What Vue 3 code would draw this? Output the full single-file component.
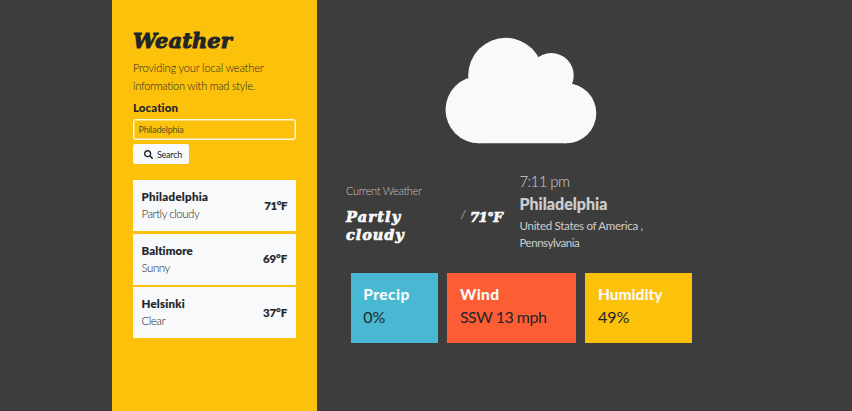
<script setup>
const places = [
  { name: 'Philadelphia', condition: 'Partly cloudy', temp: '71°F', key: 'phl' },
  { name: 'Baltimore', condition: 'Sunny', temp: '69°F', key: 'bal' },
  { name: 'Helsinki', condition: 'Clear', temp: '37°F', key: 'hel' },
]
const stats = [
  { label: 'Precip', value: '0%', kind: 'precip' },
  { label: 'Wind', value: 'SSW 13 mph', kind: 'wind' },
  { label: 'Humidity', value: '49%', kind: 'humidity' },
]
</script>

<template>
  <div class="page">
    <aside class="sidebar">
      <h1>Weather</h1>
      <p class="intro">Providing your local weather<br /><span class="second">information with mad style.</span></p>
      <label class="label" for="location">Location</label>
      <input id="location" class="field" type="text" placeholder="Philadelphia" />
      <button class="search" type="button">
        <svg viewBox="0 0 512 512" width="9" height="9"><path fill="currentColor" d="M505 442.700 405.300 343c-4.500-4.500-10.600-7-17-7H372c27.600-35.300 44-79.700 44-128C416 93.100 322.900 0 208 0S0 93.100 0 208s93.100 208 208 208c48.300 0 92.700-16.400 128-44v16.300c0 6.400 2.500 12.500 7 17l99.700 99.700c9.400 9.400 24.600 9.400 33.900 0l28.300-28.300c9.400-9.400 9.400-24.600.1-34zM208 336c-70.700 0-128-57.200-128-128 0-70.700 57.200-128 128-128 70.700 0 128 57.200 128 128 0 70.700-57.200 128-128 128z" /></svg>
        <span>Search</span>
      </button>
      <ul class="places">
        <li v-for="p in places" :key="p.key" :class="p.key">
          <div>
            <div class="name">{{ p.name }}</div>
            <div class="cond">{{ p.condition }}</div>
          </div>
          <span class="temp">{{ p.temp }}</span>
        </li>
      </ul>
    </aside>

    <main class="main">
      <svg class="cloud" viewBox="0 0 152 107" width="152" height="107">
        <g fill="#f8f9fa">
          <circle cx="34" cy="72.700" r="33.500" />
          <circle cx="60.700" cy="38.300" r="37.500" />
          <circle cx="106.300" cy="38.400" r="22.400" />
          <circle cx="121.300" cy="76.200" r="30" />
          <path d="M34 50h87.300v56.200H34z" />
        </g>
      </svg>
      <section class="summary">
        <div class="current">
          <div class="caption">Current Weather</div>
          <div class="reading">
            <div class="state">Partly<br /><span class="second">cloudy</span></div>
            <div class="degrees"><i>/</i><span>71°F</span></div>
          </div>
        </div>
        <div class="where">
          <div class="time">7:11 pm</div>
          <div class="city">Philadelphia</div>
          <div class="region">United States of America ,<br /><span class="second">Pennsylvania</span></div>
        </div>
      </section>
      <section class="stats">
        <div v-for="s in stats" :key="s.kind" class="stat" :class="s.kind">
          <h2>{{ s.label }}</h2>
          <div class="value">{{ s.value }}</div>
        </div>
      </section>
    </main>
  </div>
</template>

<style>
body { background: #3d3d3d; overflow: hidden; }
</style>

<style scoped>
* { box-sizing: border-box; }
.page {
  display: flex;
  height: 411px;
  padding-left: 112px;
  background: #3d3d3d;
  color: #212529;
  font-family: Lato, "Liberation Sans", sans-serif;
  white-space: nowrap;
}
.sidebar { width: 205px; padding: 26px 21px 0; background: #fcc10a; }
h1, h2, p, ul { margin: 0; padding: 0; }
h1 {
  font: italic 700 21px/30px "DejaVu Serif", serif;
  letter-spacing: 0.1px;
  -webkit-text-stroke: 1px currentColor;
}
.intro { margin-top: 3px; font-size: 11px; font-weight: 300; letter-spacing: -0.12px; line-height: 17.500px; }
.intro .second { letter-spacing: -0.25px; }
.label { display: block; margin-top: 5px; font-size: 11.500px; font-weight: 900; line-height: 17px; letter-spacing: 0.1px; }
.field {
  display: block;
  width: 163px;
  height: 21px;
  margin-top: 3px;
  padding: 0 4.500px;
  border: 1px solid #fff8e0;
  border-radius: 2.500px;
  background: transparent;
  box-shadow: inset 0 0 0 0.5px #fff8e0;
  font: 9px Lato, sans-serif;
  letter-spacing: -0.23px;
}
.field::placeholder { color: #5e5126; opacity: 1; }
.search {
  display: flex;
  align-items: center;
  width: 56px;
  height: 20px;
  margin-top: 4px;
  padding: 0 0 0 11px;
  gap: 4px;
  border: 0;
  border-radius: 2px;
  background: #f8f9fa;
  color: #212529;
  font: 9px Lato, sans-serif;
  letter-spacing: -0.25px;
}
.places { margin-top: 16px; list-style: none; }
.places li {
  display: flex;
  align-items: center;
  justify-content: space-between;
  height: 51px;
  margin-bottom: 2.500px;
  padding: 0 9px 1px 8.500px;
  background: #f8f9fa;
}
.name { font-size: 11.500px; font-weight: 900; letter-spacing: 0.22px; line-height: 17px; -webkit-text-stroke: 0.15px currentColor; }
.phl .name { letter-spacing: 0.3px; }
.bal .name { letter-spacing: 0.1px; }
.cond { font-size: 11.500px; font-weight: 300; letter-spacing: -0.48px; line-height: 17px; }
.temp { font-size: 11.500px; font-weight: 900; letter-spacing: -0.15px; -webkit-text-stroke: 0.15px currentColor; }
.phl .temp { letter-spacing: -0.5px; }

.main { width: 408px; padding: 37px 0 0 29px; color: #f8f9fa; }
.cloud { display: block; margin-left: 99px; }
.summary { display: flex; height: 128.500px; padding-top: 27px; }
.current { width: 173.500px; padding-top: 11px; }
.caption { color: #c3c3c4; font-size: 11px; font-weight: 300; letter-spacing: -0.3px; line-height: 18px; }
.reading {
  display: flex;
  margin-top: 8px;
  font: italic 700 14.500px/18px "DejaVu Serif", serif;
  letter-spacing: 1.2px;
  -webkit-text-stroke: 0.7px currentColor;
}
.state { width: 115px; }
.state .second { letter-spacing: 0.9px; }
.degrees { display: flex; font-size: 13.500px; letter-spacing: -0.8px; }
.degrees i { width: 9px; font: italic 300 11px/14px Lato, sans-serif; -webkit-text-stroke: 0; }
.where { color: #cdcdce; }
.time { font-size: 15px; font-weight: 300; letter-spacing: -0.6px; line-height: 21.500px; }
.city { font-size: 16px; font-weight: 900; line-height: 22px; -webkit-text-stroke: 0.15px currentColor; }
.region { margin-top: 2px; font-size: 11.500px; letter-spacing: -0.28px; line-height: 17px; }
.region .second { letter-spacing: -0.48px; }
.stats { display: flex; gap: 9px; padding-left: 4.700px; }
.stat { height: 70.500px; padding: 10px 12.500px 0; }
.stat h2 { color: #f8f9fa; font-size: 15.500px; font-weight: 900; line-height: 23px; }
.value { color: #212529; font-size: 16px; line-height: 22px; }
.precip { width: 87.700px; background: #49b8d3; }
.precip h2, .wind h2 { letter-spacing: 0.45px; }
.wind { width: 129px; background: #fd5d35; }
.wind .value { letter-spacing: -0.5px; }
.humidity { width: 107px; background: #fcc10a; }
</style>
